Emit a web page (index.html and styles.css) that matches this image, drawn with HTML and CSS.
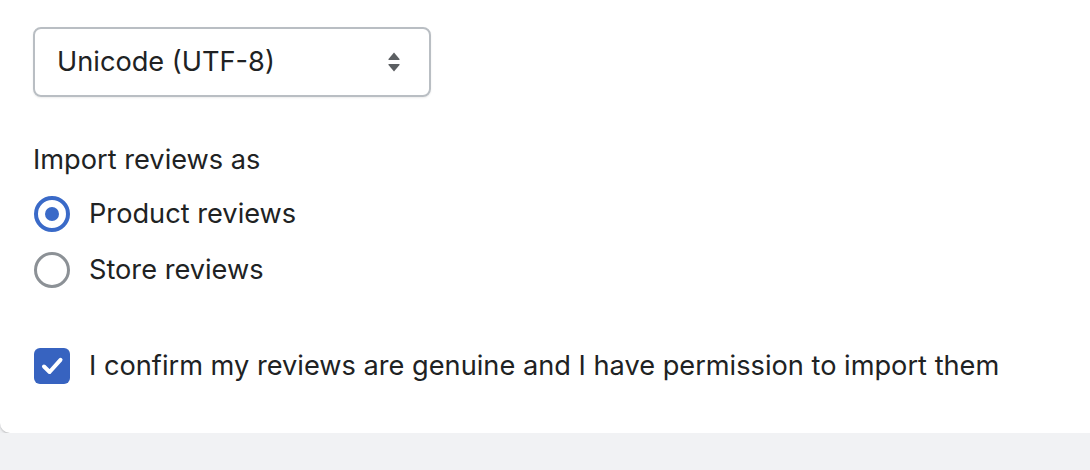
FILE: index.html
```html
<!DOCTYPE html>
<html lang="en">
<head>
<meta charset="utf-8">
<title>Import reviews</title>
<link rel="stylesheet" href="styles.css">
</head>
<body>
<div class="card">
  <div class="select">
    <span class="select-text">Unicode (UTF-8)</span>
    <svg class="select-arrows" width="14" height="22" viewBox="0 0 14 22" aria-hidden="true">
      <path d="M7 1.5 L12.5 8 Q13 9 12 9 H2 Q1 9 1.5 8 Z" fill="#5c5f62"/>
      <path d="M7 20.5 L12.5 14 Q13 13 12 13 H2 Q1 13 1.5 14 Z" fill="#5c5f62"/>
    </svg>
  </div>

  <div class="group-label">Import reviews as</div>
  <div class="radio-list">
    <label class="choice">
      <span class="radio radio-on"><span class="radio-dot"></span></span>
      <span class="choice-text">Product reviews</span>
    </label>
    <label class="choice">
      <span class="radio"></span>
      <span class="choice-text">Store reviews</span>
    </label>
  </div>

  <label class="choice confirm">
    <span class="checkbox">
      <svg width="36" height="36" viewBox="0 0 36 36" aria-hidden="true">
        <path d="M10 18.5 L15.6 24 L26.5 11.8" fill="none" stroke="#ffffff" stroke-width="4" stroke-linecap="round" stroke-linejoin="round"/>
      </svg>
    </span>
    <span class="choice-text">I confirm my reviews are genuine and I have permission to import them</span>
  </label>
</div>
</body>
</html>
```

FILE: styles.css
```css
html, body {
  margin: 0;
  padding: 0;
  background: #f1f2f4;
  overflow: hidden;
}

body {
  font-family: Inter, "Noto Sans", "Liberation Sans", sans-serif;
  color: #202223;
  font-size: 27.2px;
}

.card {
  background: #ffffff;
  width: 1090px;
  box-sizing: border-box;
  height: 433px;
  padding: 27px 33px 0 33px;
  border-radius: 0 0 0 10px;
  box-shadow: 0 1px 2px rgba(0, 0, 0, 0.18), 0 2px 4px rgba(0, 0, 0, 0.06);
  display: flex;
  flex-direction: column;
}

.select {
  width: 398px;
  height: 70px;
  box-sizing: border-box;
  border: 2px solid #b9bec3;
  border-radius: 8px;
  box-shadow: 0 1px 2px rgba(0, 0, 0, 0.08);
  display: flex;
  align-items: center;
  justify-content: space-between;
  padding: 0 28px 0 22px;
}

.select-text {
  line-height: 40px;
}

.select-arrows {
  display: block;
}

.group-label {
  margin-top: 43px;
  line-height: 40px;
}

.radio-list {
  margin-top: 14px;
  display: flex;
  flex-direction: column;
  gap: 16px;
}

.choice {
  display: flex;
  align-items: center;
  height: 40px;
}

.choice-text {
  margin-left: 19px;
  line-height: 40px;
}

.radio {
  width: 36px;
  height: 36px;
  box-sizing: border-box;
  border-radius: 50%;
  border: 3px solid #8c9196;
  display: flex;
  align-items: center;
  justify-content: center;
  margin-left: 1px;
}

.radio-on {
  border: 4px solid #3a6ac8;
}

.radio-dot {
  width: 14px;
  height: 14px;
  border-radius: 50%;
  background: #3a6ac8;
}

.confirm {
  margin-top: 56px;
}

.checkbox {
  width: 36px;
  height: 36px;
  flex: 0 0 36px;
  border-radius: 6px;
  background: #3763c0;
  display: flex;
  align-items: center;
  justify-content: center;
  margin-left: 1px;
}

.checkbox svg {
  display: block;
  flex: 0 0 36px;
}
```
